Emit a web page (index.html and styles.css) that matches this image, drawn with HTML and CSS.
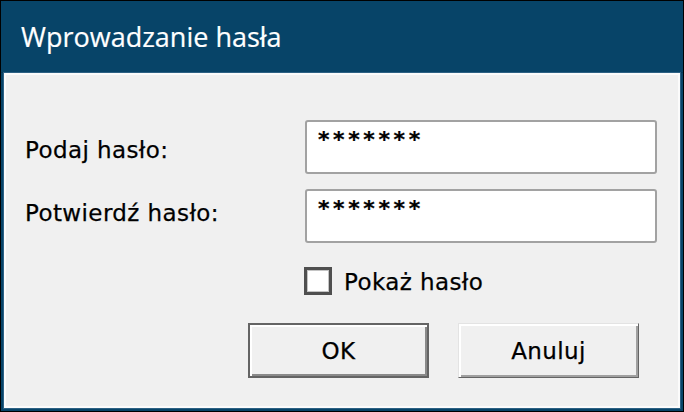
FILE: index.html
```html
<!DOCTYPE html>
<html lang="pl">
<head>
<meta charset="utf-8">
<title>Wprowadzanie hasła</title>
<link rel="stylesheet" href="styles.css">
</head>
<body>
<div class="window">
  <div class="titlebar"><span class="title">Wprowadzanie hasła</span></div>
  <div class="content">
    <div class="form">
      <div class="lbl lbl-first">Podaj hasło:</div>
      <div class="field">*******</div>
      <div class="lbl lbl-second">Potwierdź hasło:</div>
      <div class="field">*******</div>
      <div class="check-row"><span class="checkbox"></span><span class="check-text">Pokaż hasło</span></div>
    </div>
    <div class="buttons">
      <button class="btn btn-default">OK</button>
      <button class="btn">Anuluj</button>
    </div>
  </div>
</div>
</body>
</html>
```
FILE: styles.css
```css
* { box-sizing: border-box; }
html, body { margin: 0; padding: 0; }
body { width: 684px; height: 412px; overflow: hidden; background: #000; }

.window {
  width: 684px;
  height: 412px;
  border: 1px solid #000;
  background: #074468;
  display: flex;
  flex-direction: column;
}

.titlebar {
  height: 72px;
  flex-shrink: 0;
  border-bottom: 1px solid #053a5a;
  display: flex;
  align-items: center;
  padding-left: 20px;
}

.title {
  font-family: "Open Sans", sans-serif;
  font-size: 27px;
  color: #fff;
  -webkit-text-stroke: 0.2px #fff;
}

.content {
  flex: 1;
  margin: 0 3px 3px;
  background: #f0f0f0;
  border: 2px solid #fbfbfb;
  box-shadow: 0 0 0 1px #2d6184;
  font-family: "DejaVu Sans", sans-serif;
  font-size: 23px;
  letter-spacing: 0.4px;
  color: #000;
  -webkit-text-stroke: 0.25px #000;
}

.form {
  display: grid;
  grid-template-columns: 280px 352px;
  row-gap: 15px;
  padding: 45px 0 0 19px;
}

.lbl { line-height: 26px; align-self: start; }
.lbl-first { margin-top: 17px; }
.lbl-second { margin-top: 11px; }

.field {
  height: 54px;
  background: #fff;
  border: 2px solid #a2a2a2;
  border-radius: 3px;
  padding: 5px 0 0 11px;
  font-size: 22px;
  font-weight: bold;
  letter-spacing: 3.6px;
  line-height: 26px;
}

.check-row {
  grid-column: 2;
  display: flex;
  align-items: center;
  gap: 12px;
  margin-top: 8px;
  margin-left: -1px;
}

.checkbox {
  width: 28px;
  height: 28px;
  border: 3px solid #4f4f4f;
  background: #fff;
  box-shadow: inset 0 0 0 1px #c4c4c4;
}

.check-text { line-height: 26px; padding-top: 3px; }

.buttons {
  display: flex;
  justify-content: flex-end;
  gap: 29px;
  padding-right: 39px;
  margin-top: 28px;
}

.btn {
  width: 181px;
  height: 55px;
  padding: 0;
  font-family: inherit;
  font-size: inherit;
  letter-spacing: inherit;
  color: #000;
  -webkit-text-stroke: inherit;
  background: #f0f0f0;
  border: 1px solid;
  border-color: #e3e3e3 #646464 #646464 #e3e3e3;
  box-shadow: inset 2px 2px 0 #fff, inset -2px -2px 0 #a0a0a0;
}

.btn-default {
  border: 2px solid #646464;
  box-shadow: inset 2px 2px 0 #fff, inset -2px -2px 0 #8a8a8a;
}
```
